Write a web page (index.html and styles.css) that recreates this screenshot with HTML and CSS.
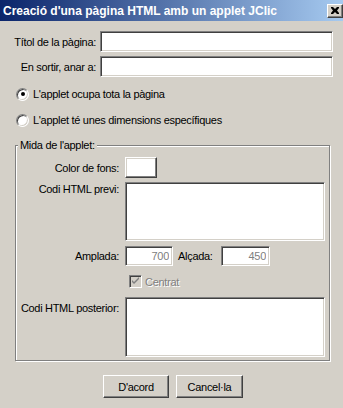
FILE: index.html
```html
<!DOCTYPE html>
<html>

<head>
  <title>Creació d'una pàgina HTML amb un applet JClic</title>
  <link rel="stylesheet" href="styles.css">
</head>

<body>
  <div class="window">
    <div class="titlebar">
      <span class="title">Creació d'una pàgina HTML amb un applet JClic</span>
      <button class="close" title="Tanca">
        <svg width="8" height="7" viewBox="0 0 8 7">
          <path d="M0 0h2l2 2 2-2h2v1L6 3.5 8 6v1H6L4 5 2 7H0V6l2-2.5L0 1z" fill="#000" />
        </svg>
      </button>
    </div>

    <div class="content">
      <div class="form-row">
        <label for="title">Títol de la pàgina:</label>
        <input type="text" id="title" class="field" />
      </div>
      <div class="form-row">
        <label for="exit">En sortir, anar a:</label>
        <input type="text" id="exit" class="field" />
      </div>

      <div class="radio-row">
        <span class="radio checked"></span>
        <span>L'applet ocupa tota la pàgina</span>
      </div>
      <div class="radio-row">
        <span class="radio"></span>
        <span>L'applet té unes dimensions específiques</span>
      </div>

      <fieldset class="group">
        <legend>Mida de l'applet:</legend>
        <div class="group-grid">
          <span class="lbl">Color de fons:</span>
          <span class="swatch-row"><span class="swatch"></span></span>

          <span class="lbl lbl-top">Codi HTML previ:</span>
          <textarea class="field area area-pre"></textarea>

          <span class="lbl size-lbl">Amplada:</span>
          <div class="size-row">
            <input type="text" class="field num" value="700" readonly />
            <span class="size-label">Alçada:</span>
            <input type="text" class="field num num-h" value="450" readonly />
          </div>

          <span></span>
          <div class="check-row">
            <span class="check">
              <svg width="9" height="9" viewBox="0 0 9 9">
                <path d="M1 3l2 2 5-5v2L3 7 1 5z" fill="#808080" />
              </svg>
            </span>
            <span class="disabled">Centrat</span>
          </div>

          <span class="lbl lbl-top">Codi HTML posterior:</span>
          <textarea class="field area area-post"></textarea>
        </div>
      </fieldset>

      <div class="buttons">
        <button class="btn btn-ok">D'acord</button>
        <button class="btn btn-cancel">Cancel·la</button>
      </div>
    </div>
  </div>
</body>

</html>
```

FILE: styles.css
```css
body {
  margin: 0;
  background: #d4d0c8;
  font-family: "Liberation Sans", Arial, sans-serif;
  font-size: 11px;
  letter-spacing: -0.3px;
  color: #000;
}

.window {
  width: 343px;
  height: 408px;
  background: #d4d0c8;
}

.titlebar {
  height: 21px;
  display: flex;
  align-items: center;
  justify-content: space-between;
  background: linear-gradient(to right, #0a246a, #a6caf0);
}

.title {
  padding-left: 3px;
  color: #fff;
  font-weight: bold;
  font-size: 12px;
  letter-spacing: 0;
}

.close {
  width: 16px;
  height: 14px;
  padding: 0;
  display: flex;
  align-items: center;
  justify-content: center;
  background: #d4d0c8;
  border: 1px solid;
  border-color: #fff #404040 #404040 #fff;
  box-shadow: inset -1px -1px #808080;
}

.content {
  padding: 10px 10px 0 8px;
}

.form-row {
  display: grid;
  grid-template-columns: 88px 1fr;
  column-gap: 4px;
  align-items: center;
  margin-bottom: 4px;
}

.form-row label {
  text-align: right;
  white-space: nowrap;
}

.field {
  box-sizing: border-box;
  height: 21px;
  margin: 0;
  padding: 2px 3px;
  font: inherit;
  letter-spacing: inherit;
  background: #fff;
  border: 1px solid;
  border-color: #808080 #fff #fff #808080;
  box-shadow: inset 1px 1px #404040, inset -1px -1px #d4d0c8;
  outline: none;
  resize: none;
}

.radio-row {
  height: 26px;
  display: flex;
  align-items: center;
}

.radio-row:first-of-type {
  margin-top: -1px;
}

.radio {
  box-sizing: border-box;
  width: 13px;
  height: 13px;
  margin: 0 4px 0 8px;
  border-radius: 50%;
  background: #fff;
  border: 1px solid;
  border-color: #808080 #fff #fff #808080;
  box-shadow: inset 1px 1px #404040, inset -1px -1px #d4d0c8;
  display: flex;
  align-items: center;
  justify-content: center;
}

.radio.checked::after {
  content: "";
  width: 4px;
  height: 4px;
  border-radius: 50%;
  background: #000;
}

.group {
  margin: 6px 3px 0 7px;
  padding: 0 4px 3px 0;
  border: 1px solid #808080;
  box-shadow: inset 1px 1px #fff, 1px 1px #fff;
}

.group legend {
  margin-left: 2px;
  padding: 0 2px;
  line-height: 13px;
  background: #d4d0c8;
}

.group-grid {
  display: grid;
  grid-template-columns: 103px 1fr;
  column-gap: 6px;
  padding-top: 5px;
}

.lbl {
  justify-self: end;
  align-self: center;
  white-space: nowrap;
}

.lbl-top {
  align-self: start;
  padding-top: 5px;
}

.swatch-row {
  height: 21px;
}

.swatch {
  display: block;
  box-sizing: border-box;
  width: 32px;
  height: 21px;
  background: #fff;
  border: 1px solid;
  border-color: #fff #404040 #404040 #fff;
  box-shadow: inset -1px -1px #808080, inset 1px 1px #d4d0c8;
}

.area {
  display: block;
  width: 100%;
}

.area-pre {
  height: 59px;
  margin-top: 4px;
}

.lbl-top:first-of-type {
  margin-top: 4px;
}

.size-lbl {
  margin-top: 5px;
}

.size-row {
  display: flex;
  align-items: center;
  margin-top: 5px;
  height: 20px;
}

.num {
  width: 48px;
  height: 20px;
  text-align: right;
  color: #808080;
}

.num-h {
  width: 49px;
}

.size-label {
  width: 37px;
  margin: 0 6px 0 5px;
}

.check-row {
  height: 31px;
  display: flex;
  align-items: center;
}

.check {
  box-sizing: border-box;
  width: 13px;
  height: 13px;
  margin: 0 3px 0 4px;
  background: #d4d0c8;
  border: 1px solid;
  border-color: #808080 #fff #fff #808080;
  box-shadow: inset 1px 1px #404040, inset -1px -1px #d4d0c8;
  display: flex;
  align-items: center;
  justify-content: center;
}

.disabled {
  color: #808080;
  text-shadow: 1px 1px #fff;
}

.area-post {
  height: 60px;
}

.buttons {
  display: flex;
  justify-content: center;
  gap: 7px;
  margin-top: 14px;
  padding-left: 5px;
}

.btn {
  box-sizing: border-box;
  width: 66px;
  height: 23px;
  padding: 0;
  font: inherit;
  letter-spacing: inherit;
  color: #000;
  background: #d4d0c8;
  border: 1px solid;
  border-color: #fff #404040 #404040 #fff;
  box-shadow: inset -1px -1px #808080;
}

.btn-cancel {
  width: 67px;
}
```
